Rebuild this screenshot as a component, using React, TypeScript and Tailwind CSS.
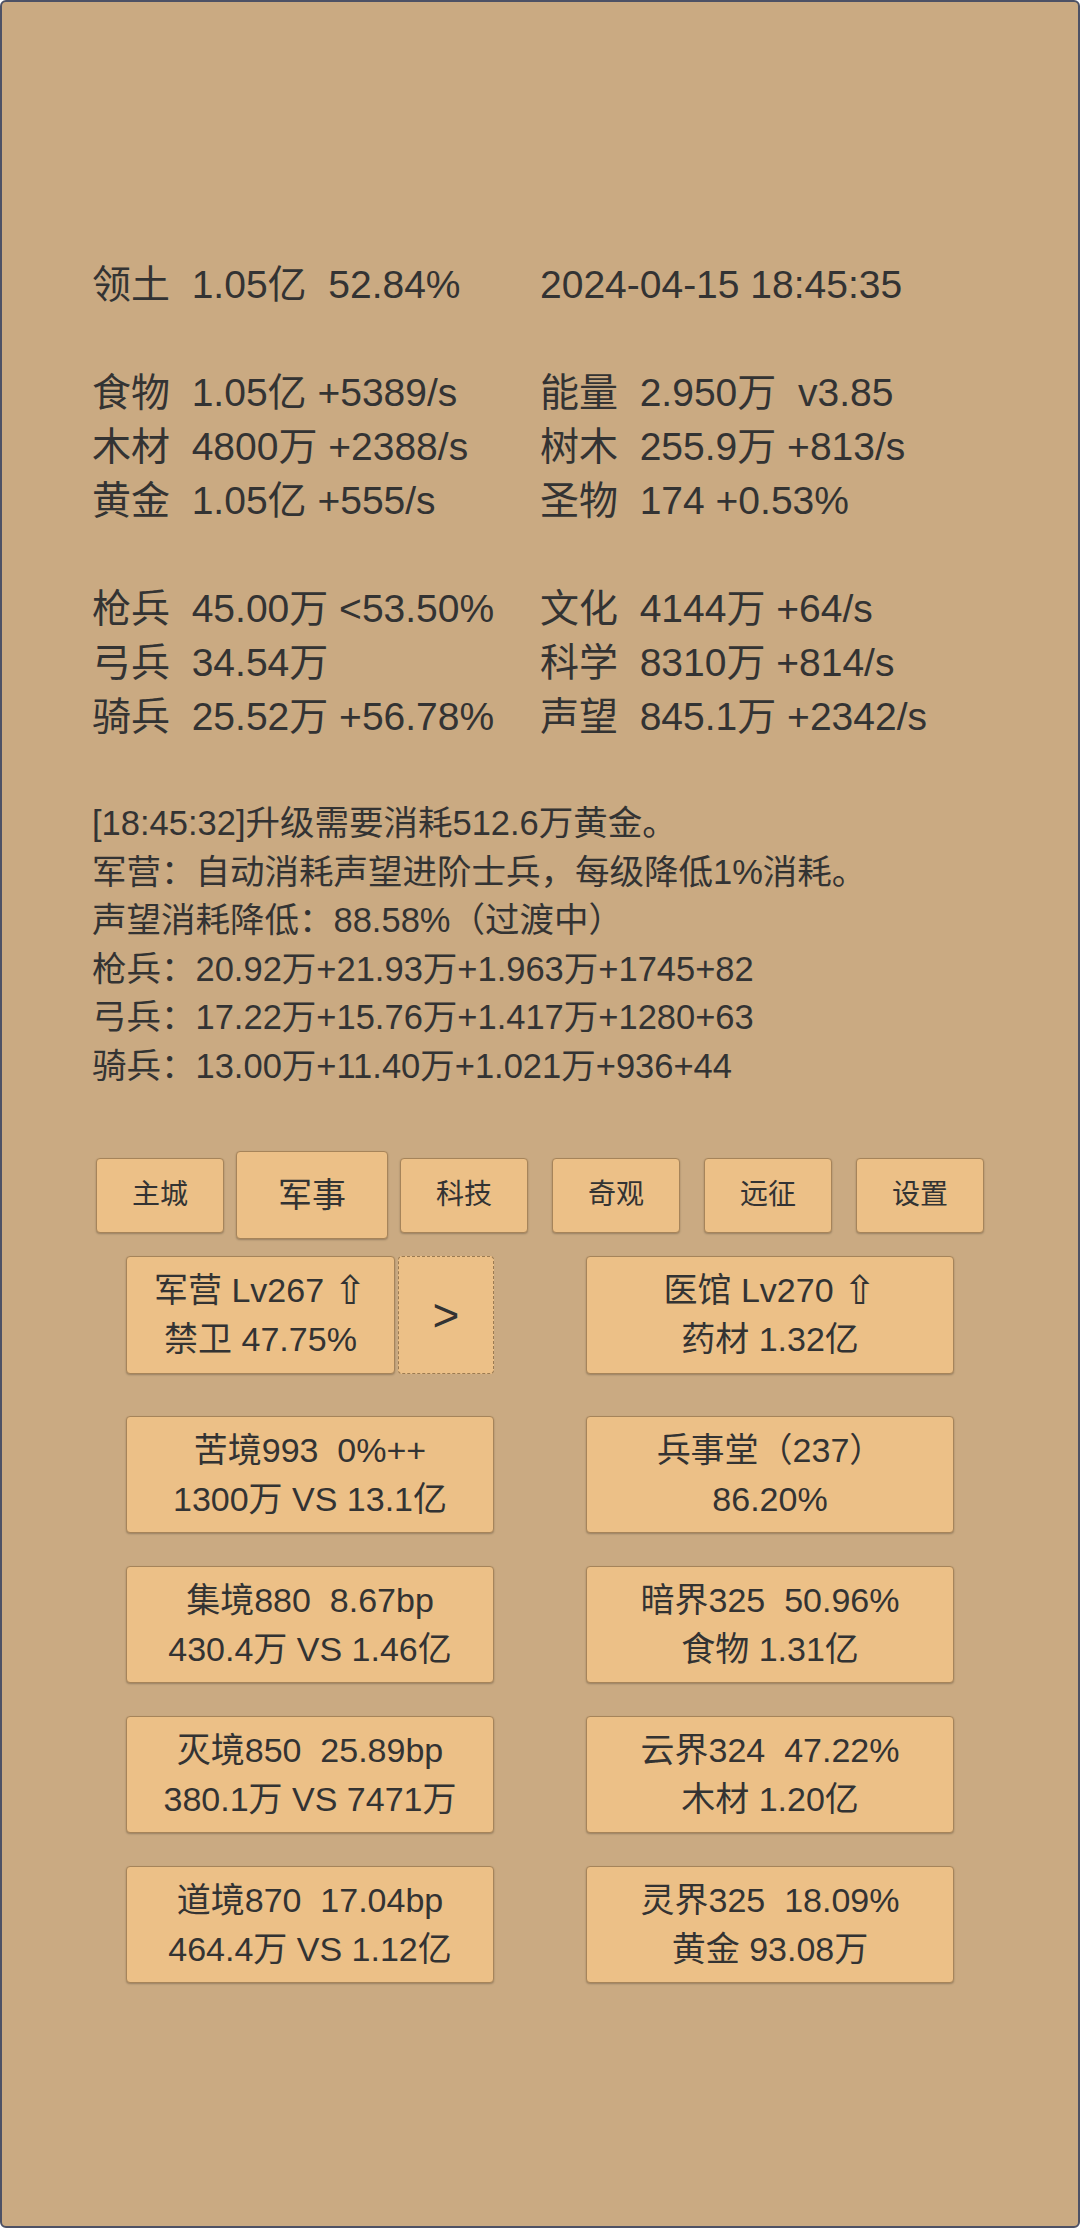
const stats: [string, string][] = [
  ['领土  1.05亿  52.84%', '2024-04-15 18:45:35'],
  ['', ''],
  ['食物  1.05亿 +5389/s', '能量  2.950万  v3.85'],
  ['木材  4800万 +2388/s', '树木  255.9万 +813/s'],
  ['黄金  1.05亿 +555/s', '圣物  174 +0.53%'],
  ['', ''],
  ['枪兵  45.00万 <53.50%', '文化  4144万 +64/s'],
  ['弓兵  34.54万', '科学  8310万 +814/s'],
  ['骑兵  25.52万 +56.78%', '声望  845.1万 +2342/s'],
];

const logs = [
  '[18:45:32]升级需要消耗512.6万黄金。',
  '军营：自动消耗声望进阶士兵，每级降低1%消耗。',
  '声望消耗降低：88.58%（过渡中）',
  '枪兵：20.92万+21.93万+1.963万+1745+82',
  '弓兵：17.22万+15.76万+1.417万+1280+63',
  '骑兵：13.00万+11.40万+1.021万+936+44',
];

const tabs = ['主城', '军事', '科技', '奇观', '远征', '设置'];

const cards: [string, string][] = [
  ['苦境993  0%++', '1300万 VS 13.1亿'],
  ['兵事堂（237）', '86.20%'],
  ['集境880  8.67bp', '430.4万 VS 1.46亿'],
  ['暗界325  50.96%', '食物 1.31亿'],
  ['灭境850  25.89bp', '380.1万 VS 7471万'],
  ['云界324  47.22%', '木材 1.20亿'],
  ['道境870  17.04bp', '464.4万 VS 1.12亿'],
  ['灵界325  18.09%', '黄金 93.08万'],
];

const box =
  'bg-[#ecc087] border border-[#a6845a] rounded-[4px] shadow-[0_1px_2px_rgba(0,0,0,0.25)] flex flex-col items-center justify-center';

function UpArrow() {
  return (
    <span className="text-[40px] leading-[40px] align-[-2px]" style={{ fontFamily: '"DejaVu Sans", sans-serif' }}>
      ⇧
    </span>
  );
}

export default function App() {
  return (
    <div
      className="h-[2228px] bg-[#caaa82] border-2 border-[#4d5165] rounded-[6px] text-[#333]"
      style={{ fontFamily: '"Liberation Sans", "Noto Sans CJK SC", sans-serif' }}
    >
      {/* resource stats */}
      <div className="pt-[256px] px-[90px] text-[39px] leading-[54px] whitespace-pre">
        {stats.map(([l, r], i) => (
          <div key={i} className="grid grid-cols-2 h-[54px]">
            <div>{l}</div>
            <div>{r}</div>
          </div>
        ))}
      </div>

      {/* message log */}
      <div className="mt-[55px] px-[90px] text-[34.5px] leading-[48.5px] whitespace-pre">
        {logs.map((t, i) => (
          <div key={i}>{t}</div>
        ))}
      </div>

      {/* tabs */}
      <div className="mt-[61px] flex justify-center items-center h-[88px]">
        {tabs.map((t) => (
          <div key={t} className="w-[152px] flex justify-center">
            {t === '军事' ? (
              <div className={`${box} w-[153px] h-[88px] text-[34px]`}>{t}</div>
            ) : (
              <div className={`${box} w-[128px] h-[75px] text-[28px]`}>{t}</div>
            )}
          </div>
        ))}
      </div>

      {/* buildings */}
      <div className="mt-[17px] w-[828px] mx-auto grid grid-cols-2 gap-x-[92px] text-[34px] leading-[49px] whitespace-pre">
        <div className="flex gap-[3px]">
          <div className={`${box} w-[269px] h-[118px]`}>
            <div>
              军营 Lv267 <UpArrow />
            </div>
            <div>禁卫 47.75%</div>
          </div>
          <div className="w-[96px] h-[118px] bg-[#ecc087] border border-dashed border-[#9c7b52] rounded-[4px] flex items-center justify-center text-[46px]">
            &gt;
          </div>
        </div>
        <div className={`${box} h-[118px]`}>
          <div>
            医馆 Lv270 <UpArrow />
          </div>
          <div>药材 1.32亿</div>
        </div>
      </div>

      {/* realms */}
      <div className="mt-[42px] w-[828px] mx-auto grid grid-cols-2 gap-x-[92px] gap-y-[33px] text-[34px] leading-[49px] whitespace-pre">
        {cards.map(([a, b], i) => (
          <div key={i} className={`${box} h-[117px]`}>
            <div>{a}</div>
            <div>{b}</div>
          </div>
        ))}
      </div>
    </div>
  );
}
